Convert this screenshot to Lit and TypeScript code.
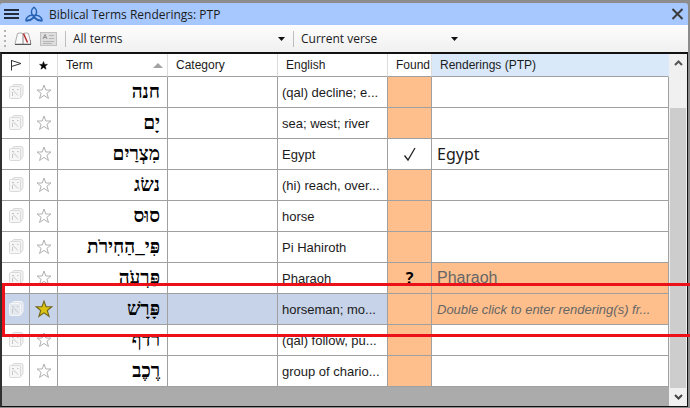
import { LitElement, html, css } from "lit";
import { customElement, property, state } from "lit/decorators.js";
import { classMap } from "lit/directives/class-map.js";

interface Term {
  term: string;
  english: string;
  found?: string;
  rendering?: string;
  kind?: "guess" | "prompt";
  starred?: boolean;
}

const TERMS: Term[] = [
  { term: "חנה", english: "(qal) decline; e..." },
  { term: "יָם", english: "sea; west; river" },
  { term: "מִצְרַיִם", english: "Egypt", found: "check", rendering: "Egypt" },
  { term: "נשׂג", english: "(hi) reach, over..." },
  { term: "סוּס", english: "horse" },
  { term: "פִּי_הַחִירֹת", english: "Pi Hahiroth" },
  { term: "פַּרְעֹה", english: "Pharaoh", found: "?", rendering: "Pharaoh", kind: "guess" },
  {
    term: "פָּרָשׁ",
    english: "horseman; mo...",
    rendering: "Double click to enter rendering(s) fr...",
    kind: "prompt",
    starred: true,
  },
  { term: "רדף", english: "(qal) follow, pu..." },
  { term: "רֶכֶב", english: "group of chario..." },
];

const STAR = "M8 1 L9.8 6 H15 L10.900 9.300 L12.500 14.500 L8 11.400 L3.500 14.500 L5.100 9.300 L1 6 H6.200 Z";

@customElement("term-star")
export class TermStar extends LitElement {
  @property({ type: Boolean }) on = false;

  static styles = css`
    :host { display: block; }
    button { display: block; width: 100%; height: 18px; padding: 0; border: 0; background: none; }
    svg { display: block; margin: 0 auto; width: 16px; height: 16px; fill: #fff; stroke: #b0b0b0; }
    .on svg { width: 18px; height: 18px; fill: #dcc412; stroke: #70661c; }
  `;

  render() {
    return html`<button
      class=${classMap({ on: this.on })}
      aria-label="Star term"
      aria-pressed=${this.on}
      @click=${() => (this.on = !this.on)}
    >
      <svg viewBox="0 0 16 16"><path d=${STAR} /></svg>
    </button>`;
  }
}

@customElement("app-root")
export class AppRoot extends LitElement {
  @state() private selected = 7;

  static styles = css`
    :host {
      display: flex;
      flex-direction: column;
      position: relative;
      box-sizing: border-box;
      min-height: 100vh;
      padding: 3px 2px 1px 0;
      overflow: hidden;
      background: #8c8c8c;
      color: #1b1b1b;
      font: 13px "Liberation Sans", Arial, sans-serif;
    }
    button { font: inherit; color: inherit; }
    svg { display: block; fill: none; }
    .title {
      display: flex;
      align-items: center;
      height: 22px;
      padding: 0 4px;
      gap: 6px;
      border-radius: 3px 3px 0 0;
      background: #a6c8ff;
      font: 12px "Open Sans", "Noto Sans", sans-serif;
    }
    .title h1 { flex: 1; margin: 0; font: inherit; }
    .plain { padding: 0; border: 0; background: none; }
    .tools {
      display: flex;
      align-items: center;
      height: 27px;
      padding-left: 4px;
      background: linear-gradient(#fdfdfd, #f0f0f0);
      font: 12px "Open Sans", "Noto Sans", sans-serif;
    }
    .book, .card { margin-left: 8px; }
    .sep { width: 1px; height: 16px; margin: 0 4px 0 8px; background: #bdbdbd; }
    .pick { display: grid; align-items: center; }
    .pick > * { grid-area: 1 / 1; }
    .pick svg { justify-self: end; pointer-events: none; }
    .pick.wide { width: 215px; }
    .pick.mid { width: 160px; }
    select {
      appearance: none;
      width: 100%;
      height: 22px;
      padding: 0 3px;
      border: 0;
      background: none;
      color: inherit;
      font: inherit;
    }
    .pane {
      display: flex;
      flex: 1;
      border: solid #111;
      border-width: 2px 1px 1px 0;
      border-left: 2px solid #303030;
      background: #ababab;
    }
    .grid { flex: 1; min-width: 0; }
    table { width: 100%; table-layout: fixed; border-collapse: separate; border-spacing: 0; }
    .c-icon { width: 28px; }
    .c-text { width: 110px; }
    .c-found { width: 44px; }
    th, td {
      box-sizing: border-box;
      padding: 0;
      overflow: hidden;
      white-space: nowrap;
      text-align: left;
      border-right: 1px solid #a0a0a0;
      border-bottom: 1px solid #a0a0a0;
    }
    th {
      height: 23px;
      padding-left: 8px;
      border-right-color: #dcdcdc;
      background: #fff;
      font-size: 12px;
      font-weight: 400;
    }
    th.icon { padding: 0; }
    th.icon svg { margin: 0 auto; }
    .sorted { display: flex; align-items: center; justify-content: space-between; padding-right: 4px; }
    th.active { background: #d9e9f9; border-right-color: #d9e9f9; }
    td { height: 31px; background: #fff; }
    td.icon svg { margin: 0 auto; }
    .term {
      padding-right: 7px;
      text-align: right;
      color: #000;
      font: 700 19px/24px "Liberation Serif", "Times New Roman", serif;
    }
    .english { padding-left: 4px; }
    .found { background: #ffbf8c; text-align: center; font: 700 16px "Noto Sans", sans-serif; color: #000; }
    .found.yes { background: #fff; }
    .found svg { margin: 0 auto; }
    .rendering { padding-left: 5px; font: 16px "Noto Sans", sans-serif; }
    .guess { background: #ffbf8c; color: #666; font: 16px "Liberation Sans", Arial, sans-serif; }
    .prompt { background: #ffbf8c; color: #666; font: italic 13px "Liberation Sans", Arial, sans-serif; }
    .selected .icon, .selected .term, .selected .category, .selected .english { background: #c6d3e8; }
    .scroll { display: flex; flex-direction: column; width: 18px; background: #f0f0f0; }
    .scroll button { display: grid; place-items: center; height: 18px; }
    .track { flex: 1; display: flex; padding: 36px 1px 0; }
    .thumb { flex: 1; background: #cdcdcd; }
    .callout {
      position: absolute;
      top: 283px;
      left: 2px;
      right: -4px;
      height: 48px;
      border: 3px solid #ec1018;
      pointer-events: none;
    }
  `;

  private arrow() {
    return html`<svg width="7" height="4" viewBox="0 0 7 4"><path d="M0 0H7L3.5 4Z" fill="#111" /></svg>`;
  }

  private dice(selected: boolean) {
    return html`<svg width="16" height="18" viewBox="0 0 16 18" stroke=${selected ? "#f6f6f6" : "#dadada"}>
      <path d="M4 3.500 L5.500 1.500 H13 Q15 1.500 15 3.500 V11.500 L12.500 15" fill=${selected ? "#dfe4ee" : "#f1f1f1"} />
      <rect x="1.5" y="3.5" width="11" height="12" rx="1" fill=${selected ? "#e4e8ef" : "#f6f6f6"} />
      <path d="M4 6.500h2M9 6.500h1.500M4.500 9v4M5 7.500l5 5" stroke="#c6c6c6" />
    </svg>`;
  }

  private found(value?: string) {
    return value === "check"
      ? html`<svg width="14" height="16" viewBox="0 0 14 16" role="img" aria-label="Found">
          <path d="M1.500 9.500 L5 14 L12 2" stroke="#222" stroke-width="1.300" />
        </svg>`
      : value ?? "";
  }

  private row(t: Term, i: number) {
    return html`<tr class=${classMap({ selected: i === this.selected })} @click=${() => (this.selected = i)}>
      <td class="icon">${this.dice(i === this.selected)}</td>
      <td class="icon"><term-star ?on=${!!t.starred}></term-star></td>
      <td class="term" lang="he" dir="rtl">${t.term}</td>
      <td class="category"></td>
      <td class="english">${t.english}</td>
      <td class=${classMap({ found: true, yes: t.found === "check" })}>${this.found(t.found)}</td>
      <td class=${classMap({ rendering: true, guess: t.kind === "guess", prompt: t.kind === "prompt" })}>
        ${t.rendering ?? ""}
      </td>
    </tr>`;
  }

  render() {
    return html`
      <header class="title">
        <button class="plain" aria-label="Menu">
          <svg width="15" height="12" viewBox="0 0 15 12"><path d="M0 2H15M0 6H15M0 10H15" stroke="#222b3c" stroke-width="2" /></svg>
        </button>
        <svg width="18" height="17" viewBox="0 0 18 17" stroke="#2963b4" stroke-width="1.500">
          <path d="M9 1 C5.500 4 5.500 8 9 11 C11.500 13.300 14 14.800 17 14.500 C16.500 10.500 13 8.500 9 9.500" />
          <path d="M9 1 C12.500 4 12.500 8 9 11 C6.500 13.300 4 14.800 1 14.500 C1.500 10.500 5 8.500 9 9.500" />
          <path d="M1 14.500 C4 15.500 6.500 14 9 11.500 C11.500 14 14 15.500 17 14.500" />
        </svg>
        <h1>Biblical Terms Renderings: PTP</h1>
        <button class="plain" aria-label="Close">
          <svg width="13" height="12" viewBox="0 0 13 12"><path d="M1.500 1L11.500 11M11.500 1L1.500 11" stroke="#3a3a3a" stroke-width="2" /></svg>
        </button>
      </header>
      <div class="tools" role="toolbar">
        <svg width="2" height="17" viewBox="0 0 2 17"><path d="M1 0V17" stroke="#b4b4b4" stroke-width="2" stroke-dasharray="2 3" /></svg>
        <button class="plain book" aria-label="Open text">
          <svg width="18" height="14" viewBox="0 0 18 14">
            <path d="M3.500 1.500 C6 .5 8 1 9 2 C10 1 12 .5 14.500 1.500 L17 12 H1Z" fill="#fafafa" stroke="#aaa" />
            <path d="M1 12.500H17" stroke="#555" />
            <path d="M9 2V12M16.500 8V12" stroke="#888" />
            <path d="M9.500 1.500 L13.500 10.500" stroke="#b52c2c" stroke-width="1.500" />
          </svg>
        </button>
        <button class="plain card" aria-label="Term details">
          <svg width="17" height="14" viewBox="0 0 17 14">
            <rect x=".5" y=".5" width="16" height="13" fill="#dedede" stroke="#c0c0c0" />
            <path d="M3 7L5 2.500L7 7M4 5.500H6" stroke="#909090" />
            <path d="M9 3.500H14M9 6.500H14M3 9.500H14M3 11.500H12" stroke="#b4b4b4" />
          </svg>
        </button>
        <span class="sep"></span>
        <label class="pick wide">
          <select aria-label="Term filter"><option>All terms</option></select>
          ${this.arrow()}
        </label>
        <span class="sep"></span>
        <label class="pick mid">
          <select aria-label="Verse filter"><option>Current verse</option></select>
          ${this.arrow()}
        </label>
      </div>
      <main class="pane">
        <div class="grid">
          <table>
            <colgroup>
              <col class="c-icon" /><col class="c-icon" /><col class="c-text" /><col class="c-text" />
              <col class="c-text" /><col class="c-found" /><col />
            </colgroup>
            <thead>
              <tr>
                <th class="icon" aria-label="Flag">
                  <svg width="12" height="12" viewBox="0 0 12 12"><path d="M1.500 1V11.500M1.500 1.500L11 4.500L1.500 7.500" stroke="#333" /></svg>
                </th>
                <th class="icon" aria-label="Star">
                  <svg width="9" height="9" viewBox="0 0 16 16"><path d=${STAR} fill="#000" stroke="#000" /></svg>
                </th>
                <th aria-sort="ascending">
                  <span class="sorted">Term
                    <svg width="10" height="5" viewBox="0 0 10 5"><path d="M0 5L5 0L10 5Z" fill="#a3a3a3" /></svg>
                  </span>
                </th>
                <th>Category</th>
                <th>English</th>
                <th>Found</th>
                <th class="active">Renderings (PTP)</th>
              </tr>
            </thead>
            <tbody>${TERMS.map((t, i) => this.row(t, i))}</tbody>
          </table>
        </div>
        <div class="scroll">
          <button class="plain" aria-label="Scroll up">
            <svg width="9" height="6" viewBox="0 0 9 6"><path d="M1 5L4.500 1.500L8 5" stroke="#555" stroke-width="2" /></svg>
          </button>
          <div class="track"><div class="thumb"></div></div>
          <button class="plain" aria-label="Scroll down">
            <svg width="9" height="6" viewBox="0 0 9 6"><path d="M1 1L4.500 4.500L8 1" stroke="#444" stroke-width="2" /></svg>
          </button>
        </div>
      </main>
      <div class="callout"></div>
    `;
  }
}
